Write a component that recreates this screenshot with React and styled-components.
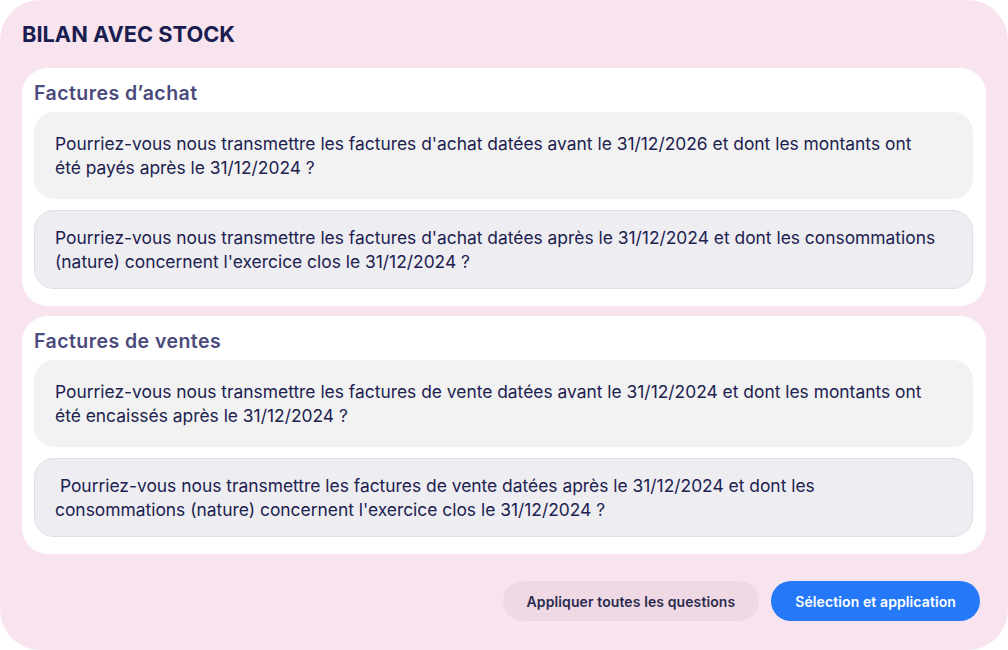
import React from "react"
import styled, { createGlobalStyle } from "styled-components"

const GlobalStyle = createGlobalStyle`
  html, body {
    margin: 0;
    padding: 0;
    background: #ffffff;
  }
  * {
    box-sizing: border-box;
  }
`

const Card = styled.main`
  width: 1008px;
  height: 650px;
  background: #f8e4ef;
  border-radius: 40px;
  padding: 20px 22px 0 22px;
  display: flex;
  flex-direction: column;
  font-family: Inter, "Liberation Sans", sans-serif;
`

const Title = styled.h1`
  margin: 0 0 20px 0;
  font-size: 21.8px;
  line-height: 28px;
  font-weight: 700;
  color: #1b1c4f;
`

const Sections = styled.div`
  display: flex;
  flex-direction: column;
  gap: 10px;
`

const Section = styled.section`
  background: #ffffff;
  border-radius: 26px;
  padding: 13px 13px 17px 12px;
  display: flex;
  flex-direction: column;
  gap: 11px;
`

const SectionTitle = styled.h2`
  margin: 0 0 -4px 0;
  font-size: 19.5px;
  line-height: 24px;
  font-weight: 600;
  color: #4a4b7c;
  letter-spacing: 0.45px;
`

const Question = styled.div`
  border-radius: 20px;
  background: ${p => (p.$active ? "#eeedf2" : "#f2f2f2")};
  border: 1px solid ${p => (p.$active ? "#dfdfe5" : "#f2f2f2")};
  padding: ${p => (p.$active ? "14.5px 20px 14.5px 20px" : "18.5px 20px 18.5px 20px")};
  font-size: 17.4px;
  line-height: 24px;
  color: #20214f;
  white-space: pre-wrap;
`

const Actions = styled.div`
  display: flex;
  justify-content: flex-end;
  gap: 12px;
  margin-top: 27px;
  padding-right: 6px;
`

const Button = styled.button`
  height: 40px;
  border: none;
  border-radius: 20px;
  padding: 0 24px;
  font-family: Inter, "Liberation Sans", sans-serif;
  font-size: 14px;
  font-weight: 600;
  letter-spacing: 0.1px;
  background: ${p => (p.$primary ? "#2579f9" : "#eed9e4")};
  color: ${p => (p.$primary ? "#ffffff" : "#2b2b4e")};
  cursor: pointer;
`

const groups = [
  {
    title: "Factures d’achat",
    questions: [
      {
        text: "Pourriez-vous nous transmettre les factures d'achat datées avant le 31/12/2026 et dont les montants ont\nété payés après le 31/12/2024 ?",
      },
      {
        text: "Pourriez-vous nous transmettre les factures d'achat datées après le 31/12/2024 et dont les consommations\n(nature) concernent l'exercice clos le 31/12/2024 ?",
        active: true,
      },
    ],
  },
  {
    title: "Factures de ventes",
    questions: [
      {
        text: "Pourriez-vous nous transmettre les factures de vente datées avant le 31/12/2024 et dont les montants ont\nété encaissés après le 31/12/2024 ?",
      },
      {
        text: " Pourriez-vous nous transmettre les factures de vente datées après le 31/12/2024 et dont les\nconsommations (nature) concernent l'exercice clos le 31/12/2024 ?",
        active: true,
      },
    ],
  },
]

const App = () => (
  <>
    <GlobalStyle />
    <Card>
      <Title>BILAN AVEC STOCK</Title>
      <Sections>
        {groups.map(g => (
          <Section key={g.title}>
            <SectionTitle>{g.title}</SectionTitle>
            {g.questions.map((q, i) => (
              <Question key={i} $active={q.active}>
                {q.text}
              </Question>
            ))}
          </Section>
        ))}
      </Sections>
      <Actions>
        <Button>Appliquer toutes les questions</Button>
        <Button $primary>Sélection et application</Button>
      </Actions>
    </Card>
  </>
)

export default App
